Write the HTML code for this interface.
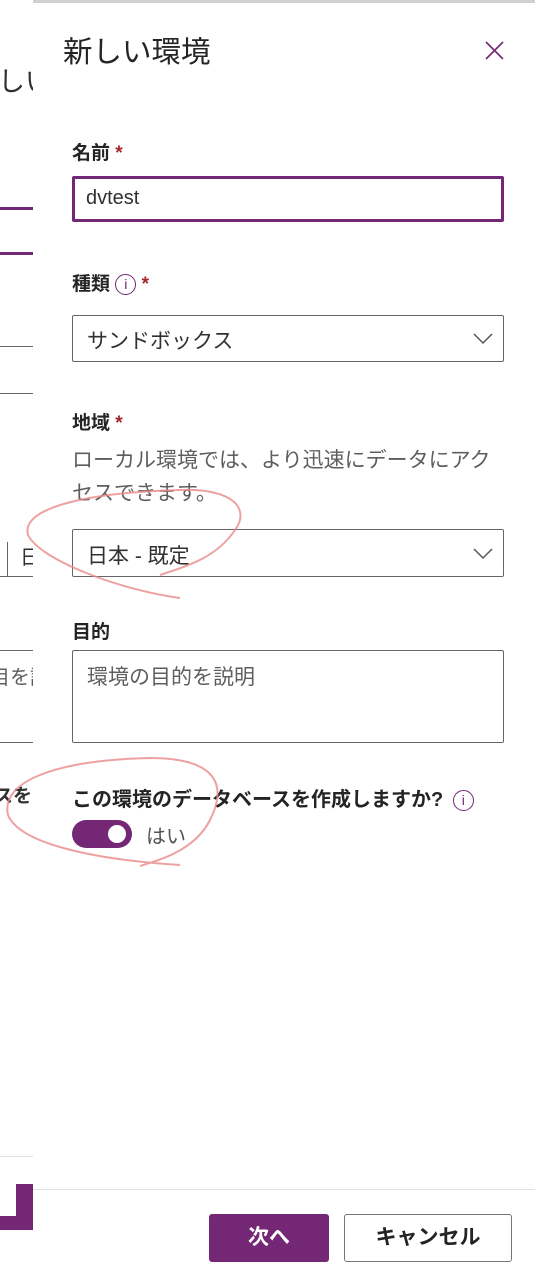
<!DOCTYPE html>
<html><head><meta charset="utf-8"><style>
body{margin:0;width:535px;height:1287px;position:relative;overflow:hidden;background:#fff;font-family:"Liberation Sans","Noto Sans CJK JP",sans-serif;color:#323130}
.a{position:absolute;white-space:nowrap}
.lbl{font-size:19px;font-weight:bold;color:#252423}
.req{color:#a4262c}
.box{position:absolute;left:72px;width:432px;border:1px solid #666;border-radius:2px;box-sizing:border-box}
.info{display:inline-block;width:21px;height:21px;border:1.5px solid #742774;border-radius:50%;color:#742774;font-size:14px;text-align:center;font-weight:normal;vertical-align:1px;box-sizing:border-box;line-height:18px}
</style></head><body>
<div class="a" style="left:0;top:0;width:33px;height:1287px;overflow:hidden">
 <div class="a" style="left:-2px;top:60px;font-size:27px;color:#323130">しい</div>
 <div class="a" style="left:0;top:207px;width:33px;height:3px;background:#742774"></div>
 <div class="a" style="left:0;top:252px;width:33px;height:3px;background:#742774"></div>
 <div class="a" style="left:0;top:346px;width:33px;height:1px;background:#666"></div>
 <div class="a" style="left:0;top:393px;width:33px;height:1px;background:#666"></div>
 <div class="a" style="left:7px;top:542px;width:1px;height:34px;background:#666"></div>
 <div class="a" style="left:0;top:576px;width:33px;height:1px;background:#666"></div>
 <div class="a" style="left:20px;top:541px;font-size:20px">日</div>
 <div class="a" style="left:-10px;top:661px;font-size:20px;color:#605e5c">目を説</div>
 <div class="a" style="left:0;top:650px;width:33px;height:1px;background:#666"></div>
 <div class="a" style="left:0;top:742px;width:33px;height:1px;background:#666"></div>
 <div class="a" style="left:-6px;top:781px;font-size:19px;font-weight:bold">スを</div>
 <div class="a" style="left:0;top:1156px;width:33px;height:1px;background:#e1e1e1"></div>
 <div class="a" style="left:16px;top:1184px;width:17px;height:46px;background:#742774"></div>
 <div class="a" style="left:0;top:1216px;width:33px;height:14px;background:#742774"></div>
</div>
<div class="a" style="left:33px;top:0;width:502px;height:3px;background:#d0d0d0"></div>
<div class="a" style="left:63px;top:29px;font-size:29.5px;color:#252423">新しい環境</div>
<svg class="a" style="left:485px;top:41px" width="19" height="19"><path d="M1 1L18 18M18 1L1 18" stroke="#742774" stroke-width="1.6"/></svg>

<div class="a lbl" style="left:72px;top:138px">名前 <span class="req">*</span></div>
<div class="box" style="top:176px;height:46px;border:3px solid #742774"><span class="a" style="left:11px;top:8px;font-size:20px">dvtest</span></div>

<div class="a lbl" style="left:72px;top:269px">種類 <span class="info">i</span> <span class="req">*</span></div>
<div class="box" style="top:315px;height:47px"><span class="a" style="left:14px;top:9px;font-size:21px">サンドボックス</span>
<svg class="a" style="left:400px;top:15px" width="20" height="14"><path d="M1 3L10 12L19 3" fill="none" stroke="#555" stroke-width="1.5"/></svg></div>

<div class="a lbl" style="left:72px;top:408px">地域 <span class="req">*</span></div>
<div class="a" style="left:72px;top:444px;font-size:21px;line-height:33px;color:#605e5c">ローカル環境では、より迅速にデータにアク<br>セスできます。</div>
<div class="box" style="top:529px;height:48px"><span class="a" style="left:14px;top:10px;font-size:21px">日本 - 既定</span>
<svg class="a" style="left:400px;top:16px" width="20" height="14"><path d="M1 3L10 12L19 3" fill="none" stroke="#555" stroke-width="1.5"/></svg></div>

<div class="a lbl" style="left:72px;top:617px">目的</div>
<div class="box" style="top:650px;height:93px"><span class="a" style="left:14px;top:10px;font-size:21px;color:#605e5c">環境の目的を説明</span></div>

<div class="a lbl" style="left:72px;top:783px;font-size:20px">この環境のデータベースを作成しますか? <span class="info" style="margin-left:4px">i</span></div>
<div class="a" style="left:72px;top:820px;width:60px;height:28px;border-radius:14px;background:#742774"></div>
<div class="a" style="left:108px;top:825px;width:18px;height:18px;border-radius:50%;background:#fff"></div>
<div class="a" style="left:146px;top:820px;font-size:20px;color:#555">はい</div>

<div class="a" style="left:33px;top:1189px;width:502px;height:1px;background:#e1e1e1"></div>
<div class="a" style="left:209px;top:1214px;width:120px;height:48px;background:#742774;border-radius:3px;color:#fff;font-weight:bold;font-size:21px;text-align:center;line-height:48px">次へ</div>
<div class="a" style="left:344px;top:1214px;width:168px;height:48px;border:1px solid #777;box-sizing:border-box;border-radius:3px;font-weight:bold;font-size:21px;text-align:center;line-height:46px;color:#252423">キャンセル</div>

<svg class="a" style="left:0;top:0" width="535" height="1287">
<path d="M180 598C120 590 40 560 28 535C20 505 100 492 180 490C235 488 250 510 235 530C215 560 180 568 160 575" fill="none" stroke="#e88a8a" stroke-width="2" opacity=".8"/>
<path d="M180 865C100 860 20 845 8 815C0 780 60 760 150 758C210 758 230 780 210 820C195 850 160 860 140 866" fill="none" stroke="#e88a8a" stroke-width="2" opacity=".8"/>
</svg>
</body></html>
